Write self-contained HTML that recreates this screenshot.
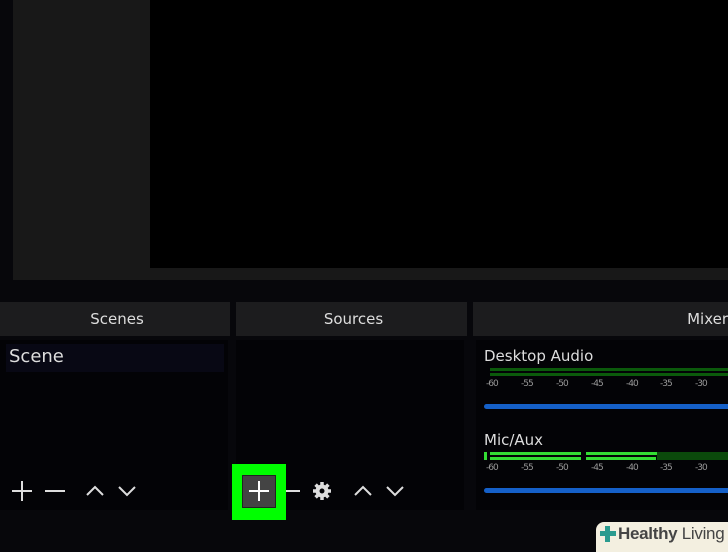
<!DOCTYPE html><html><head><style>
body{margin:0;width:728px;height:546px;background:#07070b;position:relative;overflow:hidden;font-family:"DejaVu Sans","Liberation Sans",sans-serif;color:#d8d8d8}
div{position:absolute;box-sizing:border-box}
.hdr{background:#1c1c1e;height:34px;top:302px;font-size:15px;text-align:center;line-height:34px;color:#ddd}
.t{font-size:9px;color:#999;top:379px;letter-spacing:-1px}
</style></head><body>
<div style="left:13px;top:0;width:715px;height:280px;background:#181818"></div>
<div style="left:150px;top:0;width:578px;height:268px;background:#000"></div>
<div class="hdr" style="left:0;width:230px;padding-left:4px">Scenes</div>
<div class="hdr" style="left:236px;width:231px;padding-left:4px">Sources</div>
<div class="hdr" style="left:473px;width:255px;text-align:right;padding-right:0">Mixer</div>
<div style="left:0;top:340px;width:228px;height:170px;background:#030306"></div>
<div style="left:6px;top:344px;width:218px;height:28px;background:#080814"></div>
<div style="left:9px;top:346px;font-size:18px;color:#ddd">Scene</div>
<div style="left:236px;top:340px;width:228px;height:170px;background:#030306"></div>
<div style="left:476px;top:340px;width:252px;height:170px;background:#030306"></div>
<div style="left:12px;top:490px;width:20px;height:2px;background:#ddd"></div>
<div style="left:21px;top:481px;width:2px;height:20px;background:#ddd"></div>
<div style="left:45px;top:490px;width:20px;height:2px;background:#ddd"></div>
<svg style="position:absolute;left:84px;top:482px" width="56" height="16"><path d="M3 13L11 5L19 13M35 5L43 13L51 5" stroke="#ddd" stroke-width="2" fill="none"/></svg>
<div style="left:232px;top:464px;width:54px;height:56px;background:#00ff00"></div>
<div style="left:242px;top:475px;width:34px;height:33px;background:#444;border:1px solid #222"></div>
<div style="left:249px;top:490px;width:20px;height:2px;background:#fff"></div>
<div style="left:258px;top:481px;width:2px;height:20px;background:#fff"></div>
<div style="left:286px;top:490px;width:14px;height:2px;background:#ddd"></div>
<svg style="position:absolute;left:312px;top:481px" width="20" height="20" viewBox="0 0 20 20"><g fill="#ddd"><circle cx="10" cy="10" r="6.5"/><g stroke="#ddd" stroke-width="3.5"><path d="M10 1v18M1 10h18M3.6 3.6l12.8 12.8M16.4 3.6L3.6 16.4"/></g></g><circle cx="10" cy="10" r="2.5" fill="#030306"/></svg>
<svg style="position:absolute;left:352px;top:482px" width="56" height="16"><path d="M3 13L11 5L19 13M35 5L43 13L51 5" stroke="#ddd" stroke-width="2" fill="none"/></svg>
<div style="left:484px;top:347px;font-size:15px;color:#ddd">Desktop Audio</div>
<div style="left:490px;top:368px;width:238px;height:3px;background:#0b5a0b"></div>
<div style="left:490px;top:373px;width:238px;height:3px;background:#0b5a0b"></div>
<div class="t" style="left:486px">-60</div><div class="t" style="left:521px">-55</div><div class="t" style="left:556px">-50</div><div class="t" style="left:591px">-45</div><div class="t" style="left:626px">-40</div><div class="t" style="left:660px">-35</div><div class="t" style="left:695px">-30</div>
<div style="left:484px;top:404px;width:250px;height:5px;border-radius:3px;background:#1560c8"></div>
<div style="left:484px;top:431px;font-size:15px;color:#ddd">Mic/Aux</div>
<div style="left:484px;top:452px;width:3px;height:8px;background:#33dd33"></div>
<div style="left:490px;top:452px;width:91px;height:3px;background:#33dd33"></div>
<div style="left:490px;top:457px;width:91px;height:3px;background:#33dd33"></div>
<div style="left:586px;top:452px;width:71px;height:3px;background:#33dd33"></div>
<div style="left:586px;top:457px;width:70px;height:3px;background:#33dd33"></div>
<div style="left:657px;top:452px;width:71px;height:8px;background:#0b4a0b"></div>
<div class="t" style="left:486px;top:463px">-60</div><div class="t" style="left:521px;top:463px">-55</div><div class="t" style="left:556px;top:463px">-50</div><div class="t" style="left:591px;top:463px">-45</div><div class="t" style="left:626px;top:463px">-40</div><div class="t" style="left:660px;top:463px">-35</div><div class="t" style="left:695px;top:463px">-30</div>
<div style="left:484px;top:488px;width:250px;height:5px;border-radius:3px;background:#1560c8"></div>
<div style="left:596px;top:522px;width:140px;height:30px;background:#f3efe0;border-radius:8px 0 0 0"></div>
<div style="left:600px;top:531px;width:16px;height:5px;background:#2a9b8f"></div>
<div style="left:605px;top:526px;width:5px;height:16px;background:#2a9b8f"></div>
<div style="left:618px;top:524px;font-size:17px;color:#444;font-family:'Liberation Sans',sans-serif;letter-spacing:-0.3px"><b>Healthy</b> Living</div>
</body></html>
